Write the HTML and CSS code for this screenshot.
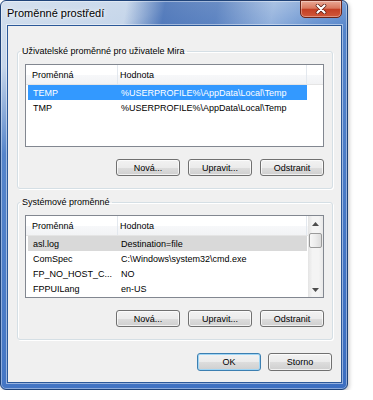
FILE: index.html
```html
<!DOCTYPE html>
<html lang="cs">
<head>
    <meta charset="UTF-8">
    <meta name="viewport" content="width=device-width, initial-scale=1.0">
    <title>Proměnné prostředí</title>
    <link rel="stylesheet" href="styles.css">
</head>
<body>
    <div class="window">
        <div class="titlebar">
            <span class="title">Proměnné prostředí</span>
            <button class="close-btn" aria-label="Zavřít">
                <svg width="12" height="10" viewBox="0 0 12 10">
                    <path d="M2.5 1.5 L9.5 8.5 M9.5 1.5 L2.5 8.5" stroke="#5a1a10" stroke-width="3.6" stroke-linecap="round"/>
                    <path d="M2.5 1.5 L9.5 8.5 M9.5 1.5 L2.5 8.5" stroke="#fff" stroke-width="2.2" stroke-linecap="round"/>
                </svg>
            </button>
        </div>

        <div class="client">
            <!-- user variables -->
            <fieldset class="group">
                <legend>Uživatelské proměnné pro uživatele Mira</legend>
                <div class="list">
                    <div class="list-main">
                        <div class="list-header">
                            <div class="hcell hcell-name">Proměnná</div>
                            <div class="hcell hcell-value">Hodnota</div>
                        </div>
                        <div class="row selected">
                            <div class="cell cell-name">TEMP</div>
                            <div class="cell cell-value">%USERPROFILE%\AppData\Local\Temp</div>
                        </div>
                        <div class="row">
                            <div class="cell cell-name">TMP</div>
                            <div class="cell cell-value">%USERPROFILE%\AppData\Local\Temp</div>
                        </div>
                    </div>
                </div>
                <div class="group-buttons">
                    <button class="btn">Nová...</button>
                    <button class="btn">Upravit...</button>
                    <button class="btn">Odstranit</button>
                </div>
            </fieldset>

            <!-- system variables -->
            <fieldset class="group group-system">
                <legend>Systémové proměnné</legend>
                <div class="list">
                    <div class="list-main">
                        <div class="list-header">
                            <div class="hcell hcell-name">Proměnná</div>
                            <div class="hcell hcell-value">Hodnota</div>
                        </div>
                        <div class="row inactive">
                            <div class="cell cell-name">asl.log</div>
                            <div class="cell cell-value">Destination=file</div>
                        </div>
                        <div class="row">
                            <div class="cell cell-name">ComSpec</div>
                            <div class="cell cell-value">C:\Windows\system32\cmd.exe</div>
                        </div>
                        <div class="row">
                            <div class="cell cell-name">FP_NO_HOST_C...</div>
                            <div class="cell cell-value">NO</div>
                        </div>
                        <div class="row">
                            <div class="cell cell-name">FPPUILang</div>
                            <div class="cell cell-value">en-US</div>
                        </div>
                    </div>
                    <div class="scrollbar">
                        <div class="sb-arrow">
                            <svg width="7" height="4" viewBox="0 0 7 4"><path d="M0 4 L3.5 0 L7 4 Z" fill="#4d4d4d"/></svg>
                        </div>
                        <div class="sb-thumb"></div>
                        <div class="sb-space"></div>
                        <div class="sb-arrow">
                            <svg width="7" height="4" viewBox="0 0 7 4"><path d="M0 0 L3.5 4 L7 0 Z" fill="#4d4d4d"/></svg>
                        </div>
                    </div>
                </div>
                <div class="group-buttons">
                    <button class="btn">Nová...</button>
                    <button class="btn">Upravit...</button>
                    <button class="btn">Odstranit</button>
                </div>
            </fieldset>

            <div class="dialog-buttons">
                <button class="btn btn-default">OK</button>
                <button class="btn">Storno</button>
            </div>
        </div>
    </div>
</body>
</html>
```

FILE: styles.css
```css
* {
    margin: 0;
    padding: 0;
    box-sizing: border-box;
}

body {
    background-color: #fff;
    font-family: "Liberation Sans", Arial, sans-serif;
    font-size: 9px;
    color: #000;
}

.window {
    width: 348px;
    height: 390px;
    border: 1px solid #1f4379;
    border-radius: 6px;
    padding: 0 5px 6px 6px;
    display: flex;
    flex-direction: column;
    background:
        linear-gradient(100deg, rgba(255,255,255,0) 36%, rgba(30,80,165,0.65) 47%, rgba(30,80,165,0.5) 62%, rgba(255,255,255,0.15) 78%, rgba(255,255,255,0) 90%) top / 100% 26px no-repeat,
        linear-gradient(160deg, #d4e0ee 0%, #c6d6ea 13%, #5585cb 30%, #3b6ec1 100%);
    box-shadow: inset 0 0 0 1px rgba(255,255,255,0.4), 1px 2px 4px rgba(0,0,0,0.25);
}

.titlebar {
    height: 24px;
    display: flex;
    align-items: center;
    justify-content: space-between;
}

.title {
    font-size: 11px;
    color: #000;
    text-shadow: 0 0 6px rgba(255,255,255,0.9), 0 0 3px #fff;
}

.close-btn {
    align-self: flex-start;
    margin-top: -1px;
    width: 42px;
    height: 18px;
    border: 1px solid #6b2418;
    border-radius: 0 0 5px 5px;
    background: linear-gradient(#eaa795, #d9785f 45%, #c43f24 52%, #d0583a 100%);
    box-shadow: inset 0 0 0 1px rgba(255,255,255,0.35);
    display: flex;
    align-items: center;
    justify-content: center;
}

.client {
    flex: 1;
    background-color: #f0f0f0;
    border: 1px solid #2b5898;
    box-shadow: 0 0 0 1px rgba(255,255,255,0.45);
    display: flex;
    flex-direction: column;
}

.group {
    margin: 19px 8px 0 9px;
    padding: 6px 8px 12px 7px;
    border: 1px solid #d5dfe5;
    border-radius: 3px;
    box-shadow: inset 1px 1px 0 #fff, 1px 1px 0 #fff;
}

.group legend {
    margin-left: -5px;
    padding: 0 2px;
    line-height: 13px;
}

.group-system {
    margin-top: 7px;
}

.list {
    height: 83px;
    border: 1px solid #828790;
    background-color: #fff;
    display: flex;
}

.list-main {
    flex: 1;
}

.list-header {
    display: flex;
    height: 20px;
    border-bottom: 1px solid #e5e5e5;
    background: linear-gradient(#fff 0, #fff 50%, #f7f8fa 51%, #f2f3f5 100%);
}

.hcell {
    display: flex;
    align-items: center;
    border-right: 1px solid #e3e8ee;
}

.hcell-name {
    width: 92px;
    padding-left: 6px;
}

.hcell-value {
    width: 189px;
    padding-left: 2px;
}

.row {
    display: flex;
    align-items: center;
    height: 15px;
    width: 279px;
    margin-left: 2px;
    white-space: nowrap;
}

.row.selected {
    background-color: #3399ff;
    color: #fff;
}

.row.inactive {
    background-color: #d9d9d9;
}

.cell {
    overflow: hidden;
}

.cell-name {
    width: 90px;
    padding-left: 5px;
}

.cell-value {
    flex: 1;
    padding-left: 3px;
}

.scrollbar {
    width: 15px;
    display: flex;
    flex-direction: column;
    background: linear-gradient(to right, #e4e4e4, #f4f4f4 30%, #f4f4f4 70%, #e9e9e9);
}

.sb-arrow {
    height: 15px;
    display: flex;
    align-items: center;
    justify-content: center;
}

.sb-thumb {
    height: 15px;
    margin: 2px 1px 0;
    border: 1px solid #9a9a9a;
    border-radius: 2px;
    background: linear-gradient(to right, #f7f7f7, #ececec 50%, #dcdcdc);
}

.sb-space {
    flex: 1;
}

.group-buttons {
    display: flex;
    justify-content: flex-end;
    gap: 8px;
    margin-top: 12px;
}

.btn {
    width: 64px;
    height: 17px;
    border: 1px solid #707070;
    border-radius: 3px;
    background: linear-gradient(#f2f2f2 0, #ebebeb 50%, #dddddd 51%, #cfcfcf 100%);
    box-shadow: inset 0 0 0 1px rgba(255,255,255,0.7);
    font-family: "Liberation Sans", Arial, sans-serif;
    font-size: 9px;
    color: #000;
}

.dialog-buttons {
    display: flex;
    justify-content: flex-end;
    gap: 7px;
    margin: 13px 9px 0 0;
}

.dialog-buttons .btn {
    height: 18px;
}

.btn-default {
    border-color: #3c7fb1;
    box-shadow: inset 0 0 0 1px #9fd5f5;
}
```
